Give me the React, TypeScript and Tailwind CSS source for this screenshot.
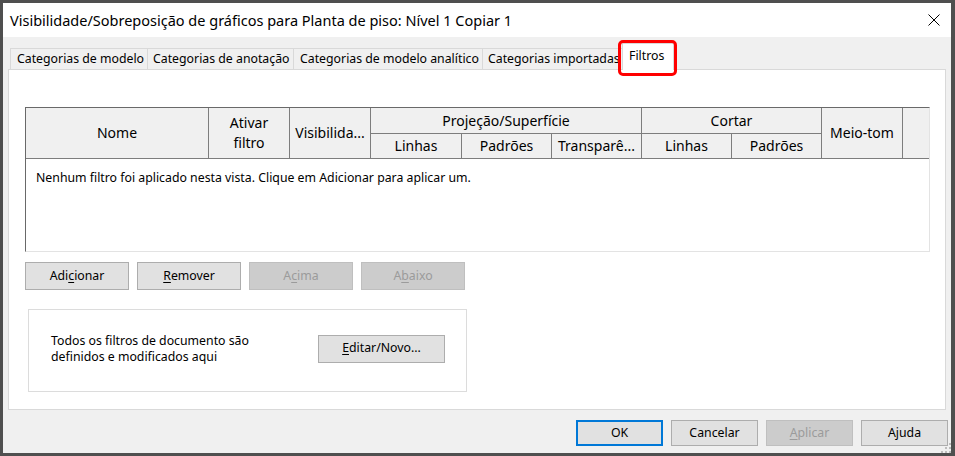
import React from "react";

function Btn({
  children,
  w,
  h,
  disabled,
  primary,
}: {
  children: React.ReactNode;
  w: string;
  h: string;
  disabled?: boolean;
  primary?: boolean;
}) {
  const base = "flex items-center justify-center text-[12.3px] leading-none box-border";
  const look = disabled
    ? "bg-[#cccccc] border border-[#bfbfbf] text-[#9b9b9b]"
    : primary
    ? "bg-[#e1e1e1] border-2 border-[#0078d7] text-black"
    : "bg-[#e1e1e1] border border-[#adadad] text-black";
  return <div className={`${base} ${look} ${w} ${h}`}>{children}</div>;
}

function U({ children }: { children: React.ReactNode }) {
  return <span className="underline decoration-1 underline-offset-2">{children}</span>;
}

export default function App() {
  const cell = "flex items-center justify-center border-r border-b border-[#7d7d7d] text-[14px] leading-[20px] text-black";
  return (
    <div className="w-[955px] h-[456px] bg-[#4f4f4f] pt-[3px] pl-[3px] pr-[4px] pb-[3px] font-['Noto_Sans',sans-serif] text-black">
      <div className="relative w-full h-full flex flex-col bg-[#f0f0f0]">
        {/* Title bar */}
        <div className="h-[34px] shrink-0 bg-white flex items-center justify-between pl-[7px] pr-[11px]">
          <span className="text-[14.5px] leading-none">
            Visibilidade/Sobreposição de gráficos para Planta de piso: Nível 1 Copiar 1
          </span>
          <svg width="12" height="12" viewBox="0 0 12 12">
            <path d="M0.5 0.5 L11.5 11.5 M11.5 0.5 L0.5 11.5" stroke="#000" strokeWidth="1" fill="none" />
          </svg>
        </div>

        {/* Tabs */}
        <div className="h-[32px] shrink-0 flex items-end pl-[7px]">
          <div className="w-[137px] h-[21px] border-t border-l border-[#d9d9d9] flex items-center pl-[6px] pt-[1px] text-[12.3px] leading-none">
            Categorias de modelo
          </div>
          <div className="w-[146px] h-[21px] border-t border-l border-[#d9d9d9] flex items-center pl-[5px] pt-[1px] text-[12.3px] leading-none">
            Categorias de anotação
          </div>
          <div className="w-[189px] h-[21px] border-t border-l border-[#d9d9d9] flex items-center pl-[6px] pt-[1px] text-[12.3px] leading-none">
            Categorias de modelo analítico
          </div>
          <div className="w-[140px] h-[21px] border-t border-l border-[#d9d9d9] flex items-center pl-[5px] pt-[1px] text-[12.3px] leading-none whitespace-nowrap overflow-hidden">
            Categorias importadas
          </div>
          <div className="relative z-10 -mb-px w-[52px] h-[27px] bg-white border-t border-l border-r border-[#d9d9d9] flex items-center pl-[6px] pb-[1px] text-[12.3px] leading-none">
            Filtros
          </div>
        </div>

        {/* Panel */}
        <div className="mx-[5px] h-[341px] shrink-0 bg-white border border-[#d9d9d9] pl-[16px] pt-[37px]">
          {/* Table */}
          <div className="w-[905px] border-t border-l border-[#696969] border-b border-r border-b-[#e3e3e3] border-r-[#e3e3e3] flex flex-col">
            <div className="grid grid-cols-[183px_81px_81px_91px_90px_90px_90px_90px_81px_1fr] grid-rows-[26px_25px] bg-[#f0f0f0]">
              <div className={`${cell} col-start-1 row-start-1 row-span-2`}>Nome</div>
              <div className={`${cell} col-start-2 row-start-1 row-span-2 flex-col text-center`}>
                <span>Ativar</span>
                <span>filtro</span>
              </div>
              <div className={`${cell} col-start-3 row-start-1 row-span-2`}>Visibilida...</div>
              <div className={`${cell} col-start-4 col-span-3 row-start-1`}>Projeção/Superfície</div>
              <div className={`${cell} col-start-7 col-span-2 row-start-1`}>Cortar</div>
              <div className={`${cell} col-start-9 row-start-1 row-span-2`}>Meio-tom</div>
              <div className="col-start-10 row-start-1 row-span-2 border-b border-[#7d7d7d]" />
              <div className={`${cell} col-start-4 row-start-2`}>Linhas</div>
              <div className={`${cell} col-start-5 row-start-2`}>Padrões</div>
              <div className={`${cell} col-start-6 row-start-2`}>Transparê...</div>
              <div className={`${cell} col-start-7 row-start-2`}>Linhas</div>
              <div className={`${cell} col-start-8 row-start-2`}>Padrões</div>
            </div>
            <div className="h-[92px] bg-white pl-[10px] pt-[11px] text-[12.3px] leading-[16px]">
              Nenhum filtro foi aplicado nesta vista. Clique em Adicionar para aplicar um.
            </div>
          </div>

          {/* Buttons row */}
          <div className="mt-[10px] flex gap-[8px]">
            <Btn w="w-[104px]" h="h-[28px]">
              <span>
                Adi<U>c</U>ionar
              </span>
            </Btn>
            <Btn w="w-[104px]" h="h-[28px]">
              <span>
                <U>R</U>emover
              </span>
            </Btn>
            <Btn w="w-[104px]" h="h-[28px]" disabled>
              <span>
                A<U>c</U>ima
              </span>
            </Btn>
            <Btn w="w-[104px]" h="h-[28px]" disabled>
              <span>
                A<U>b</U>aixo
              </span>
            </Btn>
          </div>

          {/* Group box */}
          <div className="mt-[19px] ml-[3px] w-[439px] h-[83px] border border-[#dcdcdc] flex items-center justify-between pl-[22px] pr-[21px]">
            <div className="text-[12.3px] leading-[16px] pb-[3px]">
              <div>Todos os filtros de documento são</div>
              <div>definidos e modificados aqui</div>
            </div>
            <div className="mb-[4px]">
              <Btn w="w-[127px]" h="h-[28px]">
                <span>
                  <U>E</U>ditar/Novo...
                </span>
              </Btn>
            </div>
          </div>
        </div>

        {/* Bottom buttons */}
        <div className="flex-1 flex justify-end items-start pt-[10px] pr-[3px] gap-[8px]">
          <Btn w="w-[87px]" h="h-[26px]" primary>
            OK
          </Btn>
          <Btn w="w-[87px]" h="h-[26px]">
            Cancelar
          </Btn>
          <Btn w="w-[87px]" h="h-[26px]" disabled>
            <span>
              <U>A</U>plicar
            </span>
          </Btn>
          <Btn w="w-[87px]" h="h-[26px]">
            Ajuda
          </Btn>
        </div>

        {/* Red highlight annotation around Filtros tab */}
        <div className="absolute left-[615px] top-[37px] w-[59px] h-[36px] border-[3px] border-[#ff0000] rounded-[5px] z-20" />

        {/* Resize grip */}
        <svg className="absolute right-0 bottom-0" width="10" height="10" viewBox="0 0 10 10">
          <rect x="8" y="0" width="2" height="2" fill="#bcbcbc" />
          <rect x="4" y="4" width="2" height="2" fill="#bcbcbc" />
          <rect x="8" y="4" width="2" height="2" fill="#bcbcbc" />
          <rect x="0" y="8" width="2" height="2" fill="#bcbcbc" />
          <rect x="4" y="8" width="2" height="2" fill="#bcbcbc" />
          <rect x="8" y="8" width="2" height="2" fill="#bcbcbc" />
        </svg>
      </div>
    </div>
  );
}
